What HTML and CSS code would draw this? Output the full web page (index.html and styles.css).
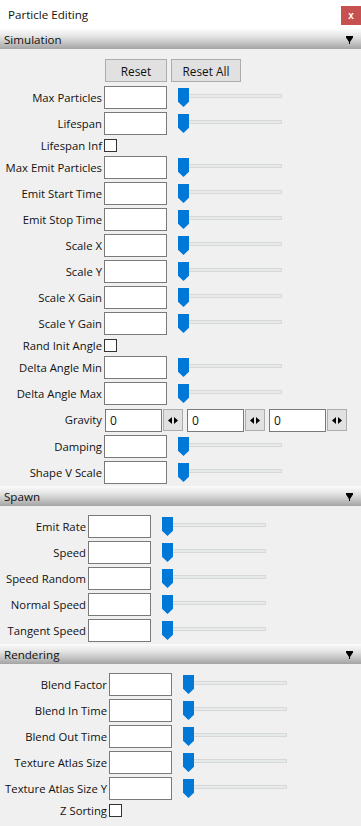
FILE: index.html
```html
<!DOCTYPE html>
<html>
<head>
    <meta charset="UTF-8">
    <title>Particle Editing</title>
    <link rel="stylesheet" href="styles.css">
</head>
<body>
    <div class="titlebar">
        <span class="title">Particle Editing</span>
        <button class="close">x</button>
    </div>

    <div class="panel-head">
        <span>Simulation</span>
        <svg class="arrow" width="7" height="8" viewBox="0 0 7 8"><polygon points="0,0 7,0 7,1.5 4,6 4,8 3,8 3,6 0,1.5"/></svg>
    </div>
    <div class="panel sim">
        <div class="actions">
            <button class="btn btn-reset">Reset</button>
            <button class="btn btn-reset-all">Reset All</button>
        </div>
        <div class="fields">
            <label>Max Particles</label>
            <div class="ctl"><input class="num" type="text"><div class="slider"><span class="track"></span><span class="thumb"></span></div></div>
            <label>Lifespan</label>
            <div class="ctl"><input class="num" type="text"><div class="slider"><span class="track"></span><span class="thumb"></span></div></div>
            <label class="short">Lifespan Inf</label>
            <div class="ctl short"><input class="check" type="checkbox"></div>
            <label>Max Emit Particles</label>
            <div class="ctl"><input class="num" type="text"><div class="slider"><span class="track"></span><span class="thumb"></span></div></div>
            <label>Emit Start Time</label>
            <div class="ctl"><input class="num" type="text"><div class="slider"><span class="track"></span><span class="thumb"></span></div></div>
            <label>Emit Stop Time</label>
            <div class="ctl"><input class="num" type="text"><div class="slider"><span class="track"></span><span class="thumb"></span></div></div>
            <label>Scale X</label>
            <div class="ctl"><input class="num" type="text"><div class="slider"><span class="track"></span><span class="thumb"></span></div></div>
            <label>Scale Y</label>
            <div class="ctl"><input class="num" type="text"><div class="slider"><span class="track"></span><span class="thumb"></span></div></div>
            <label>Scale X Gain</label>
            <div class="ctl"><input class="num" type="text"><div class="slider"><span class="track"></span><span class="thumb"></span></div></div>
            <label>Scale Y Gain</label>
            <div class="ctl"><input class="num" type="text"><div class="slider"><span class="track"></span><span class="thumb"></span></div></div>
            <label class="short">Rand Init Angle</label>
            <div class="ctl short"><input class="check" type="checkbox"></div>
            <label>Delta Angle Min</label>
            <div class="ctl"><input class="num" type="text"><div class="slider"><span class="track"></span><span class="thumb"></span></div></div>
            <label>Delta Angle Max</label>
            <div class="ctl"><input class="num" type="text"><div class="slider"><span class="track"></span><span class="thumb"></span></div></div>
            <label class="tall">Gravity</label>
            <div class="ctl tall vec">
                <input class="vnum" type="text" value="0"><button class="spin"><svg width="10" height="7" viewBox="0 0 10 7"><polygon points="0,3.5 4,0 4,7"/><polygon points="6,0 10,3.5 6,7"/></svg></button>
                <input class="vnum" type="text" value="0"><button class="spin"><svg width="10" height="7" viewBox="0 0 10 7"><polygon points="0,3.5 4,0 4,7"/><polygon points="6,0 10,3.5 6,7"/></svg></button>
                <input class="vnum" type="text" value="0"><button class="spin"><svg width="10" height="7" viewBox="0 0 10 7"><polygon points="0,3.5 4,0 4,7"/><polygon points="6,0 10,3.5 6,7"/></svg></button>
            </div>
            <label>Damping</label>
            <div class="ctl"><input class="num" type="text"><div class="slider"><span class="track"></span><span class="thumb"></span></div></div>
            <label>Shape V Scale</label>
            <div class="ctl"><input class="num" type="text"><div class="slider"><span class="track"></span><span class="thumb"></span></div></div>
        </div>
    </div>

    <div class="panel-head">
        <span>Spawn</span>
        <svg class="arrow" width="7" height="8" viewBox="0 0 7 8"><polygon points="0,0 7,0 7,1.5 4,6 4,8 3,8 3,6 0,1.5"/></svg>
    </div>
    <div class="panel spawn">
        <div class="fields">
            <label>Emit Rate</label>
            <div class="ctl"><input class="num" type="text"><div class="slider"><span class="track"></span><span class="thumb"></span></div></div>
            <label>Speed</label>
            <div class="ctl"><input class="num" type="text"><div class="slider"><span class="track"></span><span class="thumb"></span></div></div>
            <label>Speed Random</label>
            <div class="ctl"><input class="num" type="text"><div class="slider"><span class="track"></span><span class="thumb"></span></div></div>
            <label>Normal Speed</label>
            <div class="ctl"><input class="num" type="text"><div class="slider"><span class="track"></span><span class="thumb"></span></div></div>
            <label>Tangent Speed</label>
            <div class="ctl"><input class="num" type="text"><div class="slider"><span class="track"></span><span class="thumb"></span></div></div>
        </div>
    </div>

    <div class="panel-head">
        <span>Rendering</span>
        <svg class="arrow" width="7" height="8" viewBox="0 0 7 8"><polygon points="0,0 7,0 7,1.5 4,6 4,8 3,8 3,6 0,1.5"/></svg>
    </div>
    <div class="panel render">
        <div class="fields">
            <label>Blend Factor</label>
            <div class="ctl"><input class="num" type="text"><div class="slider"><span class="track"></span><span class="thumb"></span></div></div>
            <label>Blend In Time</label>
            <div class="ctl"><input class="num" type="text"><div class="slider"><span class="track"></span><span class="thumb"></span></div></div>
            <label>Blend Out Time</label>
            <div class="ctl"><input class="num" type="text"><div class="slider"><span class="track"></span><span class="thumb"></span></div></div>
            <label>Texture Atlas Size</label>
            <div class="ctl"><input class="num" type="text"><div class="slider"><span class="track"></span><span class="thumb"></span></div></div>
            <label>Texture Atlas Size Y</label>
            <div class="ctl"><input class="num" type="text"><div class="slider"><span class="track"></span><span class="thumb"></span></div></div>
            <label class="short">Z Sorting</label>
            <div class="ctl short"><input class="check" type="checkbox"></div>
        </div>
    </div>
</body>
</html>
```

FILE: styles.css
```css
body {
    margin: 0;
    padding: 0;
    width: 361px;
    min-height: 826px;
    background-color: #f0f0f0;
    font-family: 'Open Sans', 'Liberation Sans', sans-serif;
    font-size: 11.3px;
    color: #111;
    overflow: hidden;
}

/* window title */
.titlebar {
    height: 29px;
    background-color: #fff;
    display: flex;
    justify-content: space-between;
    align-items: flex-start;
}

.titlebar .title {
    font-size: 11.6px;
    line-height: 29px;
    padding-left: 8px;
}

.close {
    margin-top: 6px;
    width: 20px;
    height: 19px;
    padding: 0;
    border: none;
    background-color: #c75050;
    color: #fff;
    font-family: 'Liberation Sans', sans-serif;
    font-weight: bold;
    font-size: 10px;
    line-height: 17px;
}

/* collapsible section header */
.panel-head {
    height: 20px;
    display: flex;
    justify-content: space-between;
    align-items: center;
    padding: 0 8px 0 4px;
    background: linear-gradient(to bottom, #fcfcfc 0%, #e2e2e2 40%, #a4a4a4 100%);
    font-size: 11.6px;
}

.panel-head .arrow {
    fill: #000;
    margin-top: 1px;
}

.panel {
    padding: 9px 0 2px;
}

.panel.sim {
    padding-top: 10px;
}

.actions {
    display: flex;
    gap: 4px;
    margin: 0 0 4px 105px;
}

.btn {
    height: 23px;
    padding: 0;
    background-color: #e1e1e1;
    border: 1px solid #adadad;
    font-family: inherit;
    font-size: 11.8px;
    color: #111;
}

.btn-reset {
    width: 62px;
}

.btn-reset-all {
    width: 70px;
}

/* label / control grid */
.fields {
    display: grid;
    grid-template-columns: 102px auto;
    column-gap: 2px;
    row-gap: 3px;
}

.spawn .fields {
    grid-template-columns: 86px auto;
}

.render .fields {
    grid-template-columns: 107px auto;
}

.fields label {
    text-align: right;
    white-space: nowrap;
    align-self: center;
    height: 23px;
    line-height: 23px;
}

.fields label.short {
    height: 15px;
    line-height: 15px;
}

.fields label.tall {
    height: 24px;
    line-height: 24px;
}

.ctl {
    display: flex;
    align-items: center;
    height: 23px;
}

.ctl.short {
    height: 15px;
}

.ctl.tall {
    height: 24px;
}

.num {
    box-sizing: border-box;
    width: 63px;
    height: 23px;
    margin: 0;
    border: 1px solid #7a7a7a;
    background-color: #fff;
    padding: 0 3px;
    font-family: inherit;
    font-size: 12px;
}

.check {
    appearance: none;
    -webkit-appearance: none;
    box-sizing: border-box;
    width: 13px;
    height: 13px;
    margin: 0;
    border: 1px solid #333;
    background-color: #fff;
}

/* slider */
.slider {
    position: relative;
    width: 104px;
    height: 23px;
    margin-left: 11px;
}

.slider .track {
    position: absolute;
    left: 0;
    right: 0;
    top: 8px;
    height: 4px;
    box-sizing: border-box;
    border: 1px solid #d8d8d8;
    background-color: #e7eaea;
}

.slider .thumb {
    position: absolute;
    left: 0;
    top: 2px;
    width: 11px;
    height: 19px;
    background-color: #0078d7;
    clip-path: polygon(0 0, 100% 0, 100% 72%, 50% 100%, 0 72%);
}

/* vector input */
.vec .vnum {
    box-sizing: border-box;
    width: 57px;
    height: 23px;
    margin: 0 1px 0 1px;
    border: 1px solid #7a7a7a;
    background-color: #fff;
    padding: 0 4px;
    font-family: inherit;
    font-size: 12px;
    color: #111;
}

.vec .vnum + .spin + .vnum {
    margin-left: 4px;
}

.spin {
    box-sizing: border-box;
    width: 20px;
    height: 22px;
    padding: 0;
    margin: 0;
    background-color: #e1e1e1;
    border: 1px solid #adadad;
    display: flex;
    align-items: center;
    justify-content: center;
}

.spin svg {
    fill: #000;
}
```
